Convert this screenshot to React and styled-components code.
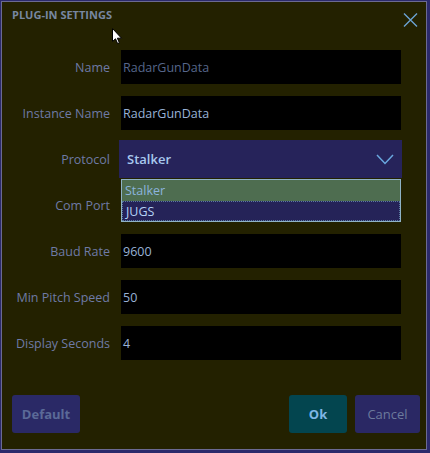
import React from "react";
import styled, { createGlobalStyle } from "styled-components";

const Global = createGlobalStyle`
  html, body { margin: 0; padding: 0; background: #2b2a6c; }
  body { font-family: "Open Sans", "Noto Sans", sans-serif; }
  * { box-sizing: border-box; }
`;

const Dialog = styled.div`
  position: relative;
  margin: 1px 0 0 1px;
  width: 426px;
  height: 449px;
  border: 1px solid #6b6a92;
  background: #232100;
  display: flex;
  flex-direction: column;
`;

const Header = styled.div`
  height: 48px;
  display: flex;
  justify-content: space-between;
  align-items: flex-start;
  padding: 5px 8px 0 10px;
`;

const Title = styled.div`
  font-size: 11px;
  font-weight: 700;
  color: #7787a0;
  line-height: 16px;
  letter-spacing: 0;
`;

const CloseBtn = styled.button`
  border: 0;
  background: transparent;
  padding: 0;
  margin-top: 5px;
  width: 16px;
  height: 15px;
  display: flex;
  align-items: center;
  justify-content: center;
  cursor: pointer;
`;

const Form = styled.div`
  display: grid;
  grid-template-columns: 108px 280px;
  column-gap: 11px;
  row-gap: 12px;
  grid-auto-rows: 34px;
`;

const Label = styled.div`
  text-align: right;
  font-size: 12.5px;
  color: #6e7aa6;
  display: flex;
  align-items: center;
  justify-content: flex-end;
`;

const Input = styled.div`
  background: #000;
  height: 34px;
  display: flex;
  align-items: center;
  padding-left: 2px;
  font-size: 12.5px;
  color: ${(p) => (p.$disabled ? "#56668a" : "#98b2d6")};
`;

const SelectWrap = styled.div`
  position: relative;
`;

const Select = styled.div`
  margin: -2px -1px -2px -2px;
  height: 38px;
  background: #26235a;
  display: flex;
  align-items: center;
  justify-content: space-between;
  padding: 0 8px 0 8px;
  font-size: 13px;
  font-weight: 600;
  color: #a8c8ee;
`;

const List = styled.div`
  position: absolute;
  left: 0;
  right: 0;
  top: 37px;
  z-index: 2;
  border: 1px solid #8fb2c6;
  display: flex;
  flex-direction: column;
`;

const Option = styled.div`
  height: ${(p) => (p.$active ? "20px" : "21px")};
  display: flex;
  align-items: center;
  padding-left: 3px;
  font-size: 12.5px;
  background: ${(p) => (p.$selected ? "#4e6d50" : "#252358")};
  color: ${(p) => (p.$selected ? "#8cb4dc" : "#b4d2f6")};
  border: ${(p) => (p.$active ? "1px dotted #5a7aa0" : "0")};
`;

const Footer = styled.div`
  margin-top: auto;
  display: flex;
  align-items: center;
  gap: 8px;
  padding: 0 6px 16px 10px;
`;

const Button = styled.button`
  height: 38px;
  min-width: ${(p) => p.$w}px;
  border: 0;
  border-radius: 3px;
  font-family: "Open Sans", "Noto Sans", sans-serif;
  font-size: 13px;
  font-weight: ${(p) => (p.$bold ? 700 : 400)};
  background: ${(p) => p.$bg};
  color: ${(p) => p.$fg};
  cursor: pointer;
`;

const Spacer = styled.div`
  flex: 1;
`;

const Cursor = styled.svg`
  position: absolute;
  left: 110px;
  top: 26px;
`;

export default function App() {
  return (
    <>
      <Global />
      <Dialog>
        <Header>
          <Title>PLUG-IN SETTINGS</Title>
          <CloseBtn aria-label="Close">
            <svg width="15" height="14" viewBox="0 0 15 14">
              <path d="M1 0.5 L14 13.5 M14 0.5 L1 13.5" stroke="#6ba2d2" strokeWidth="1.4" fill="none" />
            </svg>
          </CloseBtn>
        </Header>
        <Form>
          <Label>Name</Label>
          <Input $disabled>RadarGunData</Input>
          <Label>Instance Name</Label>
          <Input>RadarGunData</Input>
          <Label>Protocol</Label>
          <SelectWrap>
            <Select>
              <span>Stalker</span>
              <svg width="18" height="11" viewBox="0 0 18 11">
                <path d="M1 1 L9 9.5 L17 1" stroke="#6aa8e0" strokeWidth="1.5" fill="none" />
              </svg>
            </Select>
            <List>
              <Option $selected>Stalker</Option>
              <Option $active>JUGS</Option>
            </List>
          </SelectWrap>
          <Label>Com Port</Label>
          <Input />
          <Label>Baud Rate</Label>
          <Input>9600</Input>
          <Label>Min Pitch Speed</Label>
          <Input>50</Input>
          <Label>Display Seconds</Label>
          <Input>4</Input>
        </Form>
        <Footer>
          <Button $w={68} $bold $bg="#2a2966" $fg="#5b6a98">Default</Button>
          <Spacer />
          <Button $w={58} $bold $bg="#03454f" $fg="#7fb6e6">Ok</Button>
          <Button $w={65} $bg="#2a2864" $fg="#6c7a9c">Cancel</Button>
        </Footer>
        <Cursor width="11" height="17" viewBox="0 0 11 17">
          <path d="M0.5 0.5 L0.5 13.5 L3.5 10.8 L5.6 15.6 L7.4 14.8 L5.4 10.2 L9.5 10.2 Z" fill="#fff" stroke="#000" strokeWidth="1" />
        </Cursor>
      </Dialog>
    </>
  );
}
